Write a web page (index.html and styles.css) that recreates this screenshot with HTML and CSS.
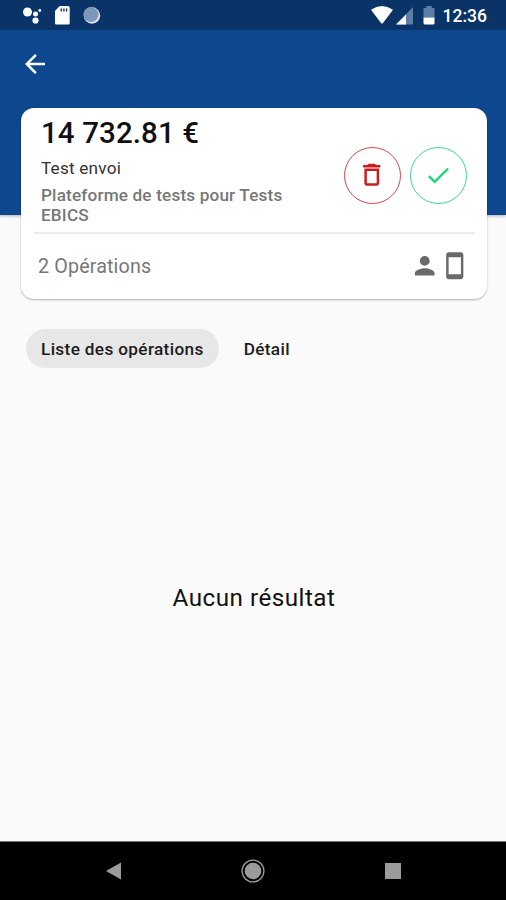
FILE: index.html
```html
<!DOCTYPE html>
<html lang="fr">
<head>
    <meta charset="UTF-8">
    <meta name="viewport" content="width=device-width, initial-scale=1.0">
    <title>Opérations</title>
    <link rel="stylesheet" href="styles.css">
</head>
<body>
    <!-- HEADER -->
    <header class="header">
        <div class="status-bar">
            <svg width="90" height="30" viewBox="0 0 90 30">
                <g fill="#fff">
                    <circle cx="12.5" cy="12" r="4.5"/>
                    <circle cx="20.5" cy="14" r="2.5"/>
                    <circle cx="24.8" cy="10.5" r="1.4"/>
                    <circle cx="20.5" cy="20.5" r="3.1"/>
                    <path d="M44.7 6H53q1.700 0 1.700 1.700V23q0 1.500-1.500 1.500H41.500Q40 24.500 40 23V11z"/>
                </g>
                <path d="M46.200 8.500v3M48.900 8.500v3M51.600 8.500v3" stroke="#0a3468" stroke-width="1.400"/>
                <circle cx="77" cy="15.500" r="8.200" fill="#dfe7f0"/>
                <circle cx="76" cy="14.500" r="7.600" fill="#7f98b8"/>
            </svg>
            <div class="status-right">
                <svg width="64" height="30" viewBox="0 0 64 30">
                    <path d="M-1 9.700Q10 2.300 21 9.700L11 23q-1 1-2 0z" fill="#fff"/>
                    <path d="M41 7v17.500H24z" fill="#5d7ea6"/>
                    <path d="M34 14.500v10H24z" fill="#fff"/>
                    <path d="M54.300 6h5.400v2h2.800v9.500h-11V8h2.800z" fill="#5d7ea6"/>
                    <path d="M51.500 17.500h11V23q0 1.500-1.500 1.500h-8q-1.500 0-1.500-1.500z" fill="#fff"/>
                </svg>
                <span class="clock">12:36</span>
            </div>
        </div>
        <button class="back" aria-label="Retour">
            <svg width="30" height="30" viewBox="0 0 24 24"><path d="M20 11H7.830l5.590-5.590L12 4l-8 8 8 8 1.410-1.410L7.830 13H20v-2z"/></svg>
        </button>
    </header>

    <main class="content">
        <!-- CARD -->
        <section class="card">
            <div class="card-top">
                <div class="summary">
                    <h1 class="amount">14 732.81 €</h1>
                    <p class="label">Test envoi</p>
                    <p class="platform">Plateforme de tests pour Tests EBICS</p>
                </div>
                <div class="actions">
                    <button class="round delete" aria-label="Supprimer">
                        <svg width="29.500" height="29.500" viewBox="0 0 24 24"><path d="M6 19c0 1.100.9 2 2 2h8c1.100 0 2-.9 2-2V7H6v12zM8 9h8v10H8V9zm7.500-5l-1-1h-5l-1 1H5v2h14V4z"/></svg>
                    </button>
                    <button class="round validate" aria-label="Valider">
                        <svg width="28.500" height="28.500" viewBox="0 0 24 24"><path d="M9 16.170L4.830 12l-1.420 1.410L9 19 21 7l-1.410-1.410z"/></svg>
                    </button>
                </div>
            </div>
            <div class="card-bottom">
                <span class="count">2 Opérations</span>
                <svg width="29.500" height="29.500" viewBox="0 0 24 24"><path d="M12 12c2.210 0 4-1.790 4-4s-1.790-4-4-4-4 1.790-4 4 1.790 4 4 4zm0 2c-2.670 0-8 1.340-8 4v2h16v-2c0-2.660-5.330-4-8-4z"/></svg>
                <svg width="29.500" height="29.500" viewBox="0 0 24 24"><path d="M17 1.010L7 1c-1.100 0-1.990.9-1.990 2v18c0 1.100.89 2 1.990 2h10c1.100 0 2-.9 2-2V3c0-1.100-.9-1.990-2-1.990zM17 19H7V5h10v14z"/></svg>
            </div>
        </section>

        <!-- TABS -->
        <nav class="tabs">
            <button class="tab active">Liste des opérations</button>
            <button class="tab">Détail</button>
        </nav>

        <p class="empty">Aucun résultat</p>
    </main>

    <!-- ANDROID NAVIGATION -->
    <footer class="nav-bar">
        <svg width="30" height="30" viewBox="0 0 30 30"><path d="M23 6.500v17L8 15z"/></svg>
        <svg width="30" height="30" viewBox="0 0 30 30"><circle cx="15" cy="15" r="8.300"/><circle class="ring" cx="15" cy="15" r="10.900"/></svg>
        <svg width="30" height="30" viewBox="0 0 30 30"><rect x="7" y="7" width="16" height="16"/></svg>
    </footer>
</body>
</html>
```
FILE: styles.css
```css
/* === GENERAL STYLING === */
* {
    box-sizing: border-box;
}

body {
    font-family: Roboto, 'Liberation Sans', sans-serif;
    background-color: #fafafa;
    color: #1c1c1c;
    margin: 0;
    height: 900px;
    display: flex;
    flex-direction: column;
    overflow: hidden;
}

h1, p {
    margin: 0;
}

button {
    font-family: inherit;
    border: none;
    padding: 0;
    background: none;
}

svg {
    display: block;
    flex: none;
    overflow: visible;
}

/* === HEADER === */
.header {
    height: 215px;
    flex: none;
    background-color: #0d478e;
    box-shadow: 0 1px 3px rgba(0, 0, 0, 0.3);
}

.status-bar {
    height: 30px;
    background-color: #0a3468;
    display: flex;
    justify-content: space-between;
    padding: 0 19px 0 15px;
}

.status-right {
    display: flex;
    gap: 7px;
}

.clock {
    color: #fff;
    font-size: 17.5px;
    font-weight: 500;
    line-height: 32px;
}

.back {
    display: block;
    margin: 19px 0 0 20px;
    fill: #fff;
}

/* === CARD === */
.content {
    flex: 1;
    display: flex;
    flex-direction: column;
}

.card {
    width: 466px;
    height: 191px;
    margin: -107px 0 0 21px;
    padding: 0 12px 0 13px;
    background-color: #fff;
    border-radius: 13px;
    box-shadow: 0 1px 2px rgba(0, 0, 0, 0.3);
    z-index: 1;
}

.card-top {
    height: 126px;
    border-bottom: 2px solid #ececec;
    display: flex;
    justify-content: space-between;
    padding: 7px 8px 0 7px;
}

.summary {
    width: 270px;
}

.amount {
    font-size: 29.5px;
    font-weight: 500;
    line-height: 36px;
    letter-spacing: 0.1px;
    color: #111;
}

.label {
    margin-top: 7px;
    font-size: 17.2px;
    line-height: 20px;
    letter-spacing: 0.2px;
    color: #333;
}

.platform {
    margin-top: 7px;
    font-size: 17.2px;
    font-weight: 500;
    line-height: 20px;
    letter-spacing: 0.15px;
    color: #777;
}

.actions {
    display: flex;
    gap: 9.5px;
    padding-top: 31.5px;
}

.round {
    width: 57px;
    height: 57px;
    border: 1.5px solid;
    border-radius: 50%;
    display: flex;
    align-items: center;
    justify-content: center;
}

.delete {
    border-color: #d3494b;
    fill: #cb1b1f;
}

.validate {
    border-color: #3edb8c;
    fill: #16d878;
}

.card-bottom {
    height: 65px;
    display: flex;
    align-items: center;
    padding: 0 6px 1px 4px;
    fill: #6a6a6a;
}

.count {
    flex: 1;
    padding-top: 1px;
    font-size: 19.7px;
    letter-spacing: 0.15px;
    color: #777;
}

/* === TABS === */
.tabs {
    display: flex;
    margin: 30px 0 0 26px;
    gap: 10px;
}

.tab {
    height: 39px;
    padding: 0 15px;
    border-radius: 20px;
    font-size: 17.2px;
    font-weight: 500;
    letter-spacing: 0.35px;
    color: #1c1c1c;
}

.tab.active {
    background-color: #e7e7e7;
}

.empty {
    margin: auto;
    padding: 0 0 14px 2px;
    font-size: 24.2px;
    line-height: 30px;
    letter-spacing: 0.5px;
    color: #111;
}

/* === ANDROID NAVIGATION === */
.nav-bar {
    height: 59px;
    flex: none;
    background-color: #000;
    border-top: 1px solid #777;
    display: flex;
    justify-content: space-between;
    align-items: center;
    padding: 0 98px;
    fill: #9b9b9b;
}

.ring {
    fill: none;
    stroke: #9b9b9b;
    stroke-width: 1.3;
}
```
